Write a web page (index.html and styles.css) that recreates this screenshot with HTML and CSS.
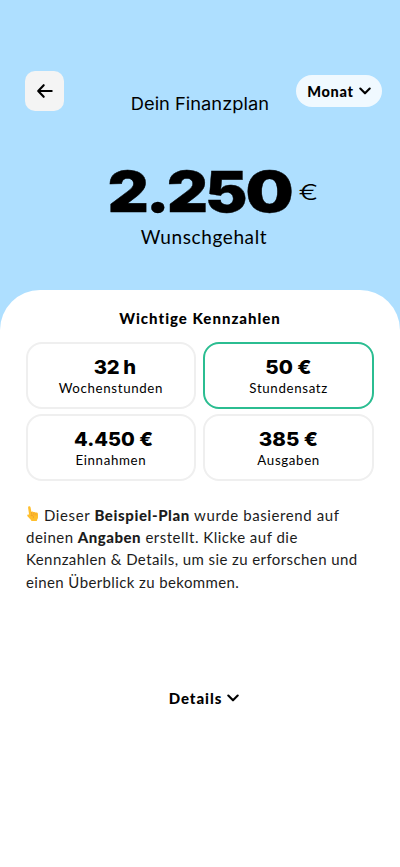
FILE: index.html
```html
<!DOCTYPE html>
<html lang="de">
<head>
<meta charset="utf-8">
<meta name="viewport" content="width=device-width, initial-scale=1">
<title>Dein Finanzplan</title>
<link rel="stylesheet" href="styles.css">
</head>
<body>
<header class="hero">
  <nav class="topbar">
    <button class="back" aria-label="Zurück"><svg width="18" height="18" viewBox="0 0 18 18"><path d="M15.7 9H2.5M7.7 3.2L2.2 9L7.7 14.8"/></svg></button>
    <h1 class="title">Dein Finanzplan</h1>
    <button class="period"><span>Monat</span><svg class="chevron" width="12" height="8" viewBox="0 0 12 8"><path d="M1.3 1.5L6 6.3L10.7 1.5"/></svg></button>
  </nav>
  <div class="salary"><span class="amount">2.25<span class="zero">0</span></span><span class="currency">€</span></div>
  <div class="salary-label">Wunschgehalt</div>
</header>
<main class="sheet">
  <h2 class="heading">Wichtige Kennzahlen</h2>
  <section class="grid">
    <div class="card"><strong class="value hours">32 h</strong><span class="label">Wochenstunden</span></div>
    <div class="card active"><strong class="value short">50 €</strong><span class="label">Stundensatz</span></div>
    <div class="card"><strong class="value">4.450 €</strong><span class="label">Einnahmen</span></div>
    <div class="card"><strong class="value short">385 €</strong><span class="label">Ausgaben</span></div>
  </section>
  <p class="intro">
    <span class="line line-1"><svg class="hand" width="14" height="16" viewBox="0 0 14 16"><path class="palm" d="M2.1 1.7C2-.1 4.3-.1 4.6 1.5L5.4 6C6.1 5.3 7.3 5.5 7.6 6.3C8.4 5.6 9.5 5.9 9.8 6.8C10.8 6.2 12 6.8 12 8.1V11C12 12.4 11.5 13.3 10.9 14.1V15H5.4L5 14L1.7 10.5C.6 9.2 1.8 8 3.1 8.8Z"/><path class="crease" d="M5.5 6.5L5.9 9M7.7 6.7L8 9M9.9 7.2L10 9.2M5 9.6C7 9 8 10 7.4 11.8"/></svg>Dieser <b>Beispiel-Plan</b> wurde basierend auf</span>
    <span class="line line-2">deinen <b>Angaben</b> erstellt. Klicke auf die</span>
    <span class="line line-3">Kennzahlen &amp; Details, um sie zu erforschen und</span>
    <span class="line line-4">einen Überblick zu bekommen.</span>
  </p>
  <button class="details"><span>Details</span><svg class="chevron" width="12" height="8" viewBox="0 0 12 8"><path d="M1.3 1.5L6 6.3L10.7 1.5"/></svg></button>
</main>
</body>
</html>
```
FILE: styles.css
```css
* { box-sizing: border-box; }
body { margin: 0; min-height: 867px; background: #aedfff; color: #000; font-family: Lato, "Noto Sans", sans-serif; display: flex; flex-direction: column; }
h1, h2, p { margin: 0; }
button { border: 0; padding: 0; color: inherit; font: inherit; }
svg { flex: none; fill: none; stroke: #000; stroke-width: 2.1; stroke-linecap: round; stroke-linejoin: round; }
.hero { height: 290px; padding-top: 71px; }
.topbar { height: 44px; display: grid; grid-template-columns: 105px 1fr 105px; align-items: start; }
.back { width: 39px; height: 40px; margin-left: 25.4px; border-radius: 10px; background: #f4f4f4; display: grid; place-items: center; }
.title { margin-top: 22px; justify-self: center; white-space: nowrap; font: 400 16.8px/22px Inter, sans-serif; transform: translateX(-.5px) scaleX(1.09); }
.period { width: 86px; height: 32px; margin: 4px 0 0 1px; border-radius: 16px; background: #f0f9ff; display: flex; align-items: center; justify-content: center; gap: 5px; font-size: 14.5px; font-weight: 900; letter-spacing: .7px; }
.salary { height: 68px; margin-top: 43px; display: flex; justify-content: center; align-items: center; padding-left: 25px; gap: 20px; font-family: Inter, sans-serif; }
.amount { font-size: 56px; font-weight: 900; line-height: 68px; letter-spacing: -2.3px; transform: translateX(2px) scaleX(1.13); -webkit-text-stroke: .4px #000; }
.zero { display: inline-block; transform: translateX(1px) scaleX(1.07); transform-origin: left; }
.currency { font-size: 22px; font-weight: 300; transform: translateX(6px) scaleX(1.35); }
.salary-label { margin-top: -1px; padding-left: 8px; text-align: center; font-size: 19px; line-height: 24px; letter-spacing: .6px; }
.sheet { flex: 1; border-radius: 40px 40px 0 0; background: #fff; padding: 17px 26px 0; }
.heading { text-align: center; font-size: 15px; line-height: 22px; font-weight: 900; letter-spacing: 1px; }
.grid { margin-top: 13px; display: grid; grid-template-columns: 1fr 1fr; gap: 5px 7px; margin-left: -.5px; }
.card { height: 67px; border: 2px solid #efefef; border-radius: 16px; display: flex; flex-direction: column; align-items: center; padding-top: 13px; }
.card.active { border-color: #2bbd91; }
.value { font: 800 19px/22px Inter, sans-serif; transform: translateX(3px) scaleX(1.05); }
.value.short { transform: translateX(0) scaleX(1.08); }
.value.hours { letter-spacing: -.3px; transform: translateX(4px) scaleX(1.06); }
.label { font-size: 13.3px; line-height: 18px; letter-spacing: .65px; }
.intro { margin-top: 23px; font-size: 15px; line-height: 22.2px; color: #1c1c1c; }
.line { display: block; white-space: nowrap; letter-spacing: .5px; }
.line-1 { letter-spacing: .6px; }
.line-2 { letter-spacing: .49px; }
.line-3 { letter-spacing: .41px; }
.line-4 { letter-spacing: .39px; }
.line b { font-weight: 900; }
.hand { margin-right: 4px; vertical-align: -1px; }
.hand .palm { fill: #ffbf2d; stroke: none; }
.hand .crease { stroke: #ec9a28; stroke-width: .7; }
.details { margin: 93px auto 0; padding-left: 8px; height: 24px; background: none; display: flex; align-items: center; gap: 5px; font-size: 15px; font-weight: 900; letter-spacing: .95px; }
```
